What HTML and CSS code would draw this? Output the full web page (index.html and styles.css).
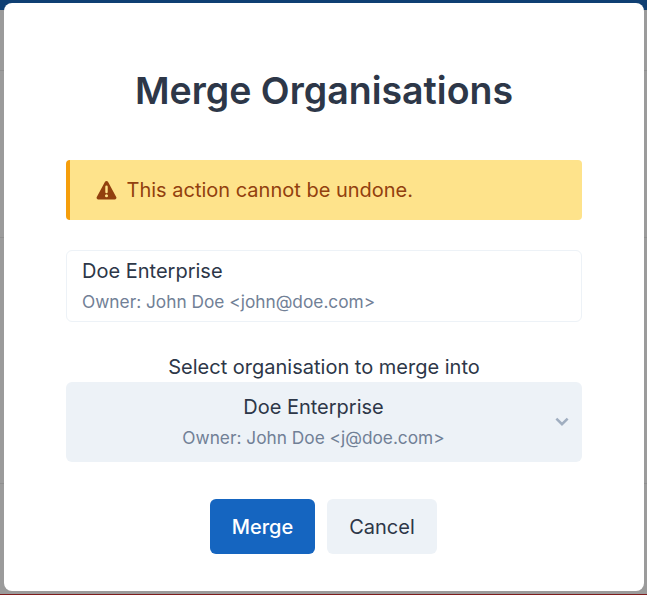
FILE: index.html
```html
<!DOCTYPE html>
<html lang="en">
<head>
<meta charset="utf-8">
<title>Merge Organisations</title>
<link rel="stylesheet" href="styles.css">
</head>
<body>
<div class="backdrop">
  <section class="modal">
    <h1 class="title">Merge Organisations</h1>
    <div class="alert">
      <svg class="alert-icon" viewBox="0 0 24 24" aria-hidden="true"><path fill="currentColor" d="M23.1 19.3 13.7 2.1a1.95 1.95 0 0 0-3.4 0L.9 19.3A1.95 1.95 0 0 0 2.6 22.2h18.8a1.95 1.95 0 0 0 1.7-2.9ZM10.6 7.6a1.4 1.4 0 0 1 2.8 0v6.2a1.4 1.4 0 0 1-2.8 0Zm1.4 12.2a1.75 1.75 0 1 1 0-3.5 1.75 1.75 0 0 1 0 3.5Z"/></svg>
      <span>This action cannot be undone.</span>
    </div>
    <div class="org-card">
      <div class="org-name">Doe Enterprise</div>
      <div class="org-owner">Owner: John Doe &lt;john@doe.com&gt;</div>
    </div>
    <div class="select-label">Select organisation to merge into</div>
    <div class="select">
      <div class="org-name">Doe Enterprise</div>
      <div class="org-owner">Owner: John Doe &lt;j@doe.com&gt;</div>
      <svg class="chevron" viewBox="0 0 24 24" aria-hidden="true"><path fill="none" stroke="currentColor" stroke-width="3.4" d="M4.5 7.5 12 15l7.5-7.5"/></svg>
    </div>
    <div class="actions">
      <button class="btn btn-primary" type="button">Merge</button>
      <button class="btn btn-secondary" type="button">Cancel</button>
    </div>
  </section>
</div>
</body>
</html>
```
FILE: styles.css
```css
* { box-sizing: border-box; }
html, body { margin: 0; height: 595px; overflow: hidden; }
body {
  font-family: Inter, "Liberation Sans", sans-serif;
  color: #2d3748;
  background: #9b9b9b;
}
.backdrop {
  height: 595px;
  padding: 3px 3px 4px 4px;
  background:
    linear-gradient(#0f3f73 0 10px, transparent 10px),
    linear-gradient(to top, #7f1d1d 0 1px, transparent 1px),
    linear-gradient(transparent 70px, #8f8f8f 70px 71px, transparent 71px),
    linear-gradient(transparent 237px, #8f8f8f 237px 238px, transparent 238px),
    linear-gradient(transparent 483px, #8f8f8f 483px 484px, transparent 484px),
    #9b9b9b;
}
.modal {
  height: 588px;
  width: 640px;
  background: #fff;
  border-radius: 8px;
  padding: 63px 62px 0;
  display: flex;
  flex-direction: column;
}
.title {
  margin: 0;
  font-size: 37.5px;
  line-height: 50px;
  font-weight: 600;
  text-align: center;
  color: #2d3748;
}
.alert {
  margin-top: 44px;
  height: 60px;
  display: flex;
  align-items: center;
  gap: 10px;
  padding-left: 25.5px;
  background: #fee38b;
  border-left: 4px solid #f59e0b;
  border-radius: 4px;
  color: #92400e;
  font-size: 20px;
}
.alert-icon { width: 21px; height: 21px; flex: none; }
.org-card {
  margin-top: 30px;
  height: 72px;
  padding: 6px 15px;
  border: 1px solid #edf2f7;
  border-radius: 6px;
}
.org-name { font-size: 20px; line-height: 28px; color: #2d3748; }
.org-owner { font-size: 17.3px; line-height: 24px; margin-top: 5px; color: #718096; }
.select-label {
  margin-top: 31px;
  margin-bottom: 1px;
  font-size: 20px;
  line-height: 28px;
  text-align: center;
  color: #2d3748;
}
.select {
  position: relative;
  height: 80px;
  padding: 11px 21px 0 0;
  background: #edf2f7;
  border-radius: 6px;
  text-align: center;
}
.chevron {
  position: absolute;
  right: 11px;
  top: 31px;
  width: 18px;
  height: 18px;
  color: #a0aec0;
}
.actions {
  margin-top: 37px;
  padding-right: 1px;
  display: flex;
  justify-content: center;
  gap: 12px;
}
.btn {
  height: 55px;
  border: 0;
  border-radius: 6px;
  font-family: inherit;
  font-size: 20px;
}
.btn-primary { width: 105px; background: #1565c0; color: #fff; font-weight: 500; }
.btn-secondary { width: 110px; background: #edf2f7; color: #2d3748; font-weight: 400; }
```
